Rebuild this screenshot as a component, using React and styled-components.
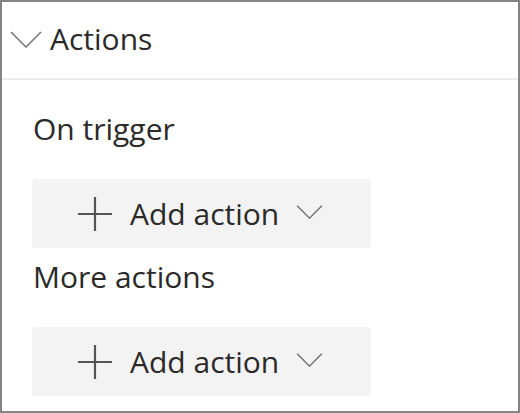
import * as React from "react"
import styled, { createGlobalStyle } from "styled-components"

const Global = createGlobalStyle`
  body {
    margin: 0;
    background: #ffffff;
    font-family: "Open Sans", "Noto Sans", sans-serif;
    color: #323130;
  }
`;

const Panel = styled.div`
  width: 520px;
  height: 413px;
  box-sizing: border-box;
  border: 2px solid #858585;
  background: #ffffff;
  display: flex;
  flex-direction: column;
`;

const Header = styled.div`
  height: 78px;
  box-sizing: border-box;
  display: flex;
  align-items: center;
  gap: 8px;
  padding: 0 0 2px 8px;
  border-bottom: 2px solid #edebe9;
`;

const HeaderTitle = styled.span`
  font-size: 30px;
  line-height: 40px;
  color: #2b2a29;
`;

const Body = styled.div`
  display: flex;
  flex-direction: column;
  padding: 29px 0 0 30px;
`;

const Label = styled.div`
  font-size: 30px;
  line-height: 40px;
  padding-left: 1px;
  margin-top: ${(p) => p.$top || 0}px;
  color: #2b2a29;
`;

const AddButton = styled.button`
  width: 339px;
  height: 69px;
  margin-top: 30px;
  box-sizing: border-box;
  border: none;
  border-radius: 4px;
  background: #f3f3f3;
  display: flex;
  align-items: center;
  padding: 0 0 0 45px;
  font-family: inherit;
  font-size: 30px;
  color: #2b2a29;
  cursor: pointer;
`;

const ButtonText = styled.span`
  margin: 0 17px 0 17px;
  line-height: 40px;
`;

const Chevron = ({ width, height, color }) => (
  <svg width={width} height={height} viewBox="0 0 32 17" fill="none">
    <path d="M1 1 L16 16 L31 1" stroke={color} strokeWidth="1.6" />
  </svg>
);

const Plus = () => (
  <svg width="36" height="36" viewBox="0 0 36 36" fill="none">
    <path d="M18 1 V35 M1 18 H35" stroke="#555" strokeWidth="2.2" />
  </svg>
);

const ActionButton = () => (
  <AddButton>
    <Plus />
    <ButtonText>Add action</ButtonText>
    <span style={{ display: "flex", marginTop: -4 }}>
      <Chevron width={27} height={14} color="#6b6b6b" />
    </span>
  </AddButton>
);

export default () => {
  return (
    <>
      <Global />
      <Panel>
        <Header>
          <Chevron width={32} height={17} color="#7a7a7a" />
          <HeaderTitle>Actions</HeaderTitle>
        </Header>
        <Body>
          <Label>On trigger</Label>
          <ActionButton />
          <Label $top={9}>More actions</Label>
          <ActionButton />
        </Body>
      </Panel>
    </>
  );
};
